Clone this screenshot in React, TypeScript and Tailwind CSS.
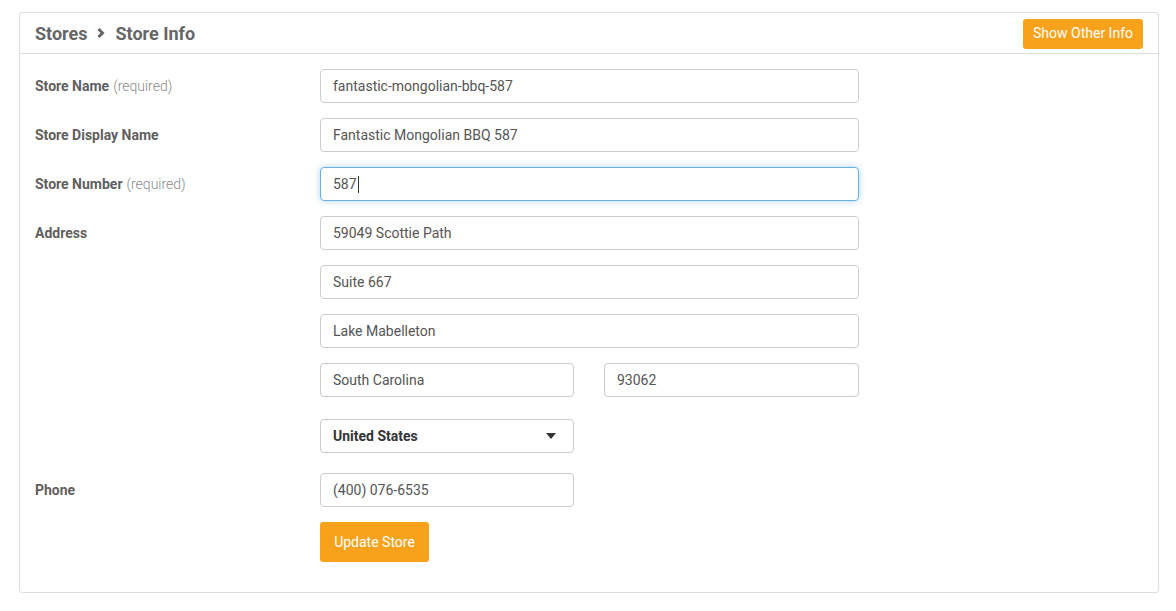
import React from "react";

const inputCls =
  "h-[34px] rounded-[4px] border border-[#cccccc] bg-white px-3 flex items-center text-[14px] text-[#555555]";

function Label({ main, req }: { main: string; req?: boolean }) {
  return (
    <div className="w-[285px] shrink-0 h-[34px] flex items-center text-[14px] pt-[1px]">
      <span className="font-bold text-[#5f5f5f]">{main}</span>
      {req && <span className="ml-1 font-light text-[#8a8a8a]">(required)</span>}
    </div>
  );
}

export default function App() {
  return (
    <div className="w-[1176px] h-[611px] bg-white pt-[12px] pl-[19px]" style={{ fontFamily: "Roboto, 'Noto Sans', sans-serif" }}>
      <div className="w-[1140px] h-[581px] border border-[#dddddd] rounded-[3px] flex flex-col">
        <div className="h-[41px] border-b border-[#dddddd] flex items-center justify-between pl-[15px] pr-[15px]">
          <div className="flex items-center text-[18px] font-bold text-[#666666]">
            <span>Stores</span>
            <svg width="10" height="12" viewBox="0 0 10 12" className="ml-[8px] mr-[10px]">
              <path d="M2.5 2 L6.5 6 L2.5 10" stroke="#666666" strokeWidth="3" fill="none" />
            </svg>
            <span>Store Info</span>
          </div>
          <button className="h-[30px] px-[10px] rounded-[3px] bg-[#f8a21c] text-white text-[14px] mt-[1px]">
            Show Other Info
          </button>
        </div>
        <div className="pt-[15px] pl-[15px] flex flex-col">
          <div className="flex">
            <Label main="Store Name" req />
            <div className={`${inputCls} w-[539px]`}>fantastic-mongolian-bbq-587</div>
          </div>
          <div className="flex mt-[15px]">
            <Label main="Store Display Name" />
            <div className={`${inputCls} w-[539px]`}>Fantastic Mongolian BBQ 587</div>
          </div>
          <div className="flex mt-[15px]">
            <Label main="Store Number" req />
            <div className="h-[34px] w-[539px] rounded-[4px] border border-[#66afe9] shadow-[0_0_6px_rgba(102,175,233,0.5)] bg-white px-3 flex items-center text-[14px] text-[#555555]">
              587<span className="inline-block w-px h-[17px] bg-[#333333] ml-[1px]" />
            </div>
          </div>
          <div className="flex mt-[15px]">
            <Label main="Address" />
            <div className="flex flex-col">
              <div className={`${inputCls} w-[539px]`}>59049 Scottie Path</div>
              <div className={`${inputCls} w-[539px] mt-[15px]`}>Suite 667</div>
              <div className={`${inputCls} w-[539px] mt-[15px]`}>Lake Mabelleton</div>
              <div className="flex mt-[15px] gap-[30px]">
                <div className={`${inputCls} w-[254px]`}>South Carolina</div>
                <div className={`${inputCls} w-[255px]`}>93062</div>
              </div>
              <div className="mt-[22px] w-[254px] h-[34px] rounded-[4px] border border-[#cccccc] bg-white px-3 flex items-center justify-between text-[14px] font-bold text-[#333333]">
                <span>United States</span>
                <svg width="10" height="6" viewBox="0 0 10 6" className="mr-[5px]">
                  <path d="M0 0 L10 0 L5 6 Z" fill="#333333" />
                </svg>
              </div>
            </div>
          </div>
          <div className="flex mt-[20px]">
            <Label main="Phone" />
            <div className="flex flex-col">
              <div className={`${inputCls} w-[254px]`}>(400) 076-6535</div>
              <button className="mt-[15px] w-[109px] h-[40px] rounded-[3px] bg-[#f8a21c] text-white text-[14px]">
                Update Store
              </button>
            </div>
          </div>
        </div>
      </div>
    </div>
  );
}
